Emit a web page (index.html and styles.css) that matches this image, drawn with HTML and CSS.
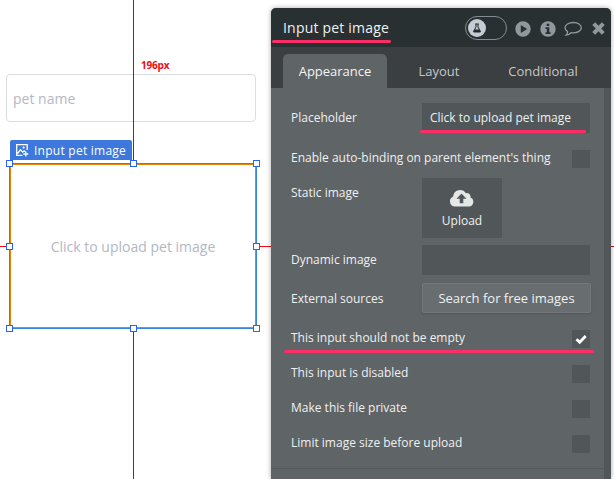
FILE: index.html
```html
<!DOCTYPE html>
<html lang="en">
<head>
<meta charset="utf-8">
<title>Input pet image</title>
<link rel="stylesheet" href="styles.css">
</head>
<body>
<main class="canvas">
  <div class="text-input"><span class="t-name">pet name</span></div>
  <i class="guide guide-top"></i><i class="guide guide-bottom"></i><i class="guide guide-side"></i>
  <span class="distance">196px</span>
  <div class="tag">
    <svg width="14" height="14" viewBox="0 0 14 14" fill="none" stroke="#fff" stroke-width="1.300"><path d="M12.200 7V1.700H1.700v10.600H7.500M2.500 10.500l3-3.800 2.200 2.400 1.500-1.300 1 1M10.800 8.500v5M8.300 11h5"/><circle cx="8.600" cy="4.600" r=".5"/></svg>
    <span class="t-tag">Input pet image</span>
  </div>
  <div class="selected"><span class="t-upload">Click to upload pet image</span>
    <i class="handle l t"></i><i class="handle c t"></i><i class="handle r t"></i>
    <i class="handle l m"></i><i class="handle r m"></i>
    <i class="handle l b"></i><i class="handle c b"></i><i class="handle r b"></i>
  </div>
</main>
<section class="panel">
  <header class="head">
    <h1 class="t-title">Input pet image</h1>
    <div class="toggle"><span class="knob"><svg width="10" height="10" viewBox="0 0 10 10"><path d="M3.200 1h3.600M4 1v3L1.600 8.300Q1.200 9 2 9h6q.8 0 .4-.7L6 4V1" fill="none" stroke="#20282a"/><path d="M2.700 6.500h4.600L8.600 9H1.400z" fill="#20282a"/></svg></span></div>
    <svg class="play" width="16" height="16" viewBox="0 0 16 16"><path fill-rule="evenodd" fill="#8f999d" d="M8 .3a7.700 7.700 0 1 0 0 15.400A7.700 7.700 0 0 0 8 .3zM5.800 4v8l6.400-4z"/></svg>
    <svg class="info" width="16" height="16" viewBox="0 0 16 16"><circle cx="8" cy="8" r="7.700" fill="#8f999d"/><path fill="#293032" d="M6.700 2.800h2.600v2.300H6.700zM5.500 6.300h3.800v5h1.300V13H5.500v-1.700h1.300V8H5.500z"/></svg>
    <svg class="chat" width="18" height="16" viewBox="0 0 18 16"><path fill="none" stroke="#8f999d" stroke-width="1.300" d="M9.300 1.500c4.500 0 8 2.300 8 5.200s-3.500 5.200-8 5.200q-1.200 0-2.200-.2-2 2-5 2.400 1.500-1.500 1.500-3.500C2 9.600 1 8.300 1 6.700c0-2.900 3.800-5.200 8.300-5.200z"/></svg>
    <svg class="close" width="13" height="13" viewBox="0 0 13 13"><path d="M1.700 1.700l9.600 9.600M11.300 1.700l-9.600 9.600" stroke="#8f999d" stroke-width="4"/></svg>
    <i class="mark mark-title"></i>
  </header>
  <nav class="tabs">
    <span class="tab active"><span class="t-app">Appearance</span></span>
    <span class="tab layout"><span class="t-lay">Layout</span></span>
    <span class="tab cond"><span class="t-con">Conditional</span></span>
  </nav>
  <div class="body">
    <div class="form">
      <div class="row"><span class="label">Placeholder</span><div class="field"><span class="t-val">Click to upload pet image</span><i class="mark mark-field"></i></div></div>
      <div class="row check g17"><span class="label t-auto">Enable auto-binding on parent element's thing</span><i class="box"></i></div>
      <div class="row top g10"><span class="label">Static image</span>
        <div class="upload">
          <svg width="24" height="18" viewBox="0 0 24 18"><path fill="#e6e8e8" d="M5.500 17.500A5.200 5.200 0 0 1 3.200 7.500 6.800 6.800 0 0 1 15.800 4.300 3.700 3.700 0 0 1 20.500 8.500a4.700 4.700 0 0 1-1.700 9z"/><path fill="#515759" d="M11.500 4.500l5 5.300h-3.200v4.400H9.700V9.800H6.500z"/></svg>
          <span class="t-up">Upload</span>
        </div></div>
      <div class="row g7"><span class="label">Dynamic image</span><div class="field"></div></div>
      <div class="row g8"><span class="label t-ext">External sources</span><button class="search"><span class="t-search">Search for free images</span></button></div>
      <div class="row check g17"><span class="label t-empty">This input should not be empty</span><i class="box"><svg width="18" height="18" viewBox="0 0 18 18"><path d="M4.500 9.300l3.200 3L13.700 6" fill="none" stroke="#fff" stroke-width="2.800"/></svg></i><i class="mark mark-empty"></i></div>
      <div class="row check g17"><span class="label">This input is disabled</span><i class="box"></i></div>
      <div class="row check g17"><span class="label">Make this file private</span><i class="box"></i></div>
      <div class="row check g17"><span class="label t-limit">Limit image size before upload</span><i class="box"></i></div>
      <div class="divider"></div>
    </div>
    <div class="scroll"></div>
  </div>
</section>
</body>
</html>
```
FILE: styles.css
```css
* { box-sizing: border-box; }
body { margin: 0; width: 614px; height: 479px; overflow: hidden; position: relative; background: #fff; font-family: "Open Sans", "Noto Sans", sans-serif; font-size: 12px; }
span, h1 { white-space: nowrap; }
svg { display: block; flex: none; }
.canvas { width: 614px; height: 479px; position: relative; }
.text-input { position: absolute; left: 6px; top: 74px; width: 250px; height: 48px; border: 1px solid #dcdde0; border-radius: 4px; padding-left: 6px; display: flex; align-items: center; color: #b4b7c4; font-size: 14px; }
.guide { position: absolute; background: #d90000; }
.guide-top { left: 133px; top: 0; width: 1px; height: 163px; }
.guide-bottom { left: 133px; top: 329px; width: 1px; height: 150px; }
.guide-side { left: 0; top: 246px; width: 614px; height: 1px; background: #f00a14; }
.distance { position: absolute; left: 141px; top: 58px; line-height: 14px; font-size: 10px; font-weight: 700; letter-spacing: -.2px; color: #f00a14; }
.tag { position: absolute; left: 10px; top: 140px; width: 122px; height: 20px; border-radius: 2px 2px 0 0; background: #3c78dd; color: #fff; display: flex; align-items: center; gap: 5px; padding-left: 5px; }
.t-tag { font-weight: 500; letter-spacing: .25px; }
.selected { position: absolute; left: 9px; top: 163px; width: 248px; height: 166px; border: 1px solid #3986df; box-shadow: inset 0 0 0 1px #e38308; background: #fff; display: flex; align-items: center; justify-content: center; color: #b4b7c4; font-size: 14px; }
.handle { position: absolute; width: 7px; height: 7px; border: 1px solid #2864ee; background: #fff; }
.l { left: -4px; } .c { left: 120px; } .r { left: 243px; }
.t { top: -4px; } .m { top: 79px; } .b { top: 161px; }
.panel { position: absolute; left: 271px; top: 8px; width: 340px; height: 471px; border-radius: 5px 5px 0 0; background: #5f6467; color: #eff0f0; box-shadow: 0 0 5px rgba(0, 0, 0, .35); }
.head { position: relative; height: 39px; background: #293032; border-radius: 5px 5px 0 0; display: flex; align-items: center; padding: 0 6px 0 12px; }
.head h1 { margin: 0; font-size: 14px; font-weight: 400; letter-spacing: .02px; }
.head .t-title { letter-spacing: .2px; }
.toggle { width: 42px; height: 24px; margin-left: auto; border: 1px solid #838d91; border-radius: 12px; padding: 2px; }
.knob { width: 18px; height: 18px; background: #c5cdd4; border-radius: 50%; display: flex; align-items: center; justify-content: center; }
.play { margin-left: 8px; } .info { margin-left: 9px; } .chat { margin-left: 8px; } .close { margin-left: 10px; }
.play, .info, .chat, .close { margin-top: 2px; }
.tabs { height: 41px; background: #3b3f41; display: flex; align-items: flex-end; padding-left: 12px; font-size: 13px; color: #c5c9ca; }
.tab { height: 34px; display: flex; align-items: center; justify-content: center; }
.active { width: 104px; background: #5f6467; color: #f5f5f5; border-radius: 5px 5px 0 0; }
.layout { width: 104px; } .cond { width: 104px; }
.body { display: flex; height: 391px; }
.form { width: 333px; padding-top: 15px; }
.scroll { width: 7px; background: #515759; }
.row { position: relative; display: grid; grid-template-columns: 131px 168px; padding-left: 20px; align-items: center; min-height: 18px; }
.check { grid-template-columns: 281px 18px; }
.label { line-height: 18px; justify-self: start; }
.check .label { position: relative; top: -1px; }
.g7 { margin-top: 7px; } .g8 { margin-top: 8px; } .g10 { margin-top: 10px; } .g17 { margin-top: 17px; }
.top { align-items: start; } .top .label { padding-top: 6px; }
.field { position: relative; height: 30px; background: #515759; display: flex; align-items: center; padding: 0 0 2px 8px; }
.box { width: 18px; height: 18px; background: #515759; }
.upload { width: 80px; height: 60px; background: #515759; display: flex; flex-direction: column; align-items: center; padding-top: 11px; font-size: 12px; line-height: 18px; gap: 5px; }
.search { width: 169px; height: 30px; border: 1px solid #73797b; border-radius: 2px; background: #686d70; color: #f0f0f0; font: inherit; font-size: 13px; padding: 0; box-shadow: 0 1px 2px rgba(0, 0, 0, .15); }
.t-ext { padding-top: 1px; }
.divider { height: 1px; background: #54595b; margin-top: 15px; }
.mark { position: absolute; height: 3px; border-radius: 2px; background: #fb2e68; }
.mark-title { left: 1px; top: 32px; width: 119px; }
.mark-field { left: -2px; top: 27px; width: 166px; }
.mark-empty { left: 13px; top: 20px; width: 310px; }
```
